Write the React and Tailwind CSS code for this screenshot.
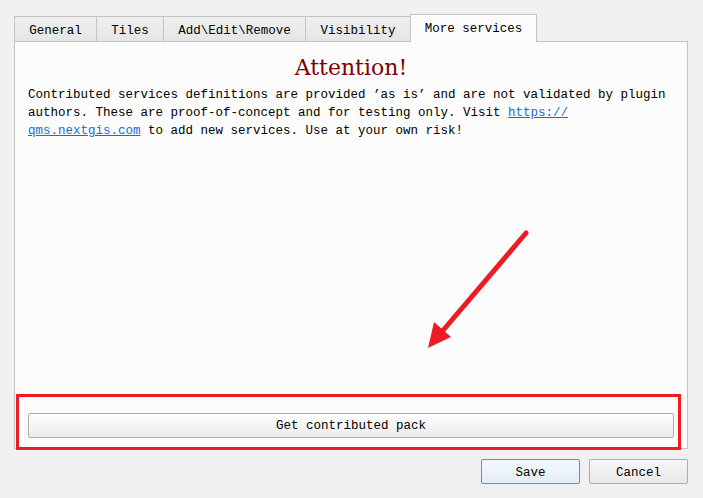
const tabs = [
  { label: 'General', w: 'w-[83px]' },
  { label: 'Tiles', w: 'w-[68px]' },
  { label: 'Add\\Edit\\Remove', w: 'w-[143px]' },
  { label: 'Visibility', w: 'w-[106px]' },
];

export default function App() {
  return (
    <div className="relative w-[703px] h-[498px] bg-[#f0f0f0] text-[12.5px] text-black font-['Liberation_Mono',monospace] overflow-hidden">
      <div className="pl-[14px] pt-[14px]">
        {/* Tab strip */}
        <div className="flex items-end h-[27px]">
          {tabs.map((t, i) => (
            <div
              key={t.label}
              className={`${t.w} ${i > 0 ? '-ml-px' : ''} h-[25px] pt-[5px] border border-b-0 border-[#c4c4c4] bg-gradient-to-b from-[#f0f0f0] to-[#e5e5e5] flex items-center justify-center`}
            >
              {t.label}
            </div>
          ))}
          <div className="-ml-px w-[127px] h-[28px] -mb-px relative z-10 border border-b-0 border-[#c4c4c4] bg-[#fcfcfc] flex items-center justify-center pt-[2px]">
            More services
          </div>
        </div>

        {/* Panel */}
        <div className="w-[674px] h-[408px] border border-[#c4c4c4] bg-[#fcfcfc] flex flex-col px-[13px] pb-[10px]">
          <div className="text-center text-[#800000] text-[22px] leading-[26px] mt-[13px] font-['DejaVu_Serif',serif]">
            Attention!
          </div>
          <p className="mt-[5px] leading-[18px]">
            Contributed services definitions are provided ’as is’ and are not validated by plugin
            <br />
            authors. These are proof-of-concept and for testing only. Visit{' '}
            <a href="#" className="text-[#1a6ccf] underline">https://</a>
            <br />
            <a href="#" className="text-[#1a6ccf] underline">qms.nextgis.com</a> to add new services. Use at your own risk!
          </p>
          <div className="flex-1" />
          <button className="h-[25px] w-full pt-[1px] border border-[#adadad] rounded-[2px] bg-gradient-to-b from-[#fdfdfd] to-[#ececec] flex items-center justify-center">
            Get contributed pack
          </button>
        </div>

        {/* Dialog buttons */}
        <div className="w-[674px] flex justify-end gap-[9px] mt-[10px]">
          <button className="w-[99px] h-[25px] pt-[3px] border border-[#3c9be8] rounded-[2px] bg-gradient-to-b from-[#f4f8fc] to-[#e3edf7] flex items-center justify-center">
            Save
          </button>
          <button className="w-[99px] h-[25px] pt-[3px] border border-[#adadad] rounded-[2px] bg-gradient-to-b from-[#f7f7f7] to-[#e8e8e8] flex items-center justify-center">
            Cancel
          </button>
        </div>
      </div>

      {/* Annotation: highlight box */}
      <div className="absolute left-[16px] top-[394px] w-[665px] h-[56px] border-[3px] border-[#ed1c24] pointer-events-none" />

      {/* Annotation: arrow */}
      <svg className="absolute left-0 top-0 pointer-events-none" width="703" height="498">
        <line x1="526" y1="233" x2="440" y2="334" stroke="#ed1c24" strokeWidth="5" strokeLinecap="round" />
        <polygon points="428,348 434,322 451,337" fill="#ed1c24" />
      </svg>
    </div>
  );
}
